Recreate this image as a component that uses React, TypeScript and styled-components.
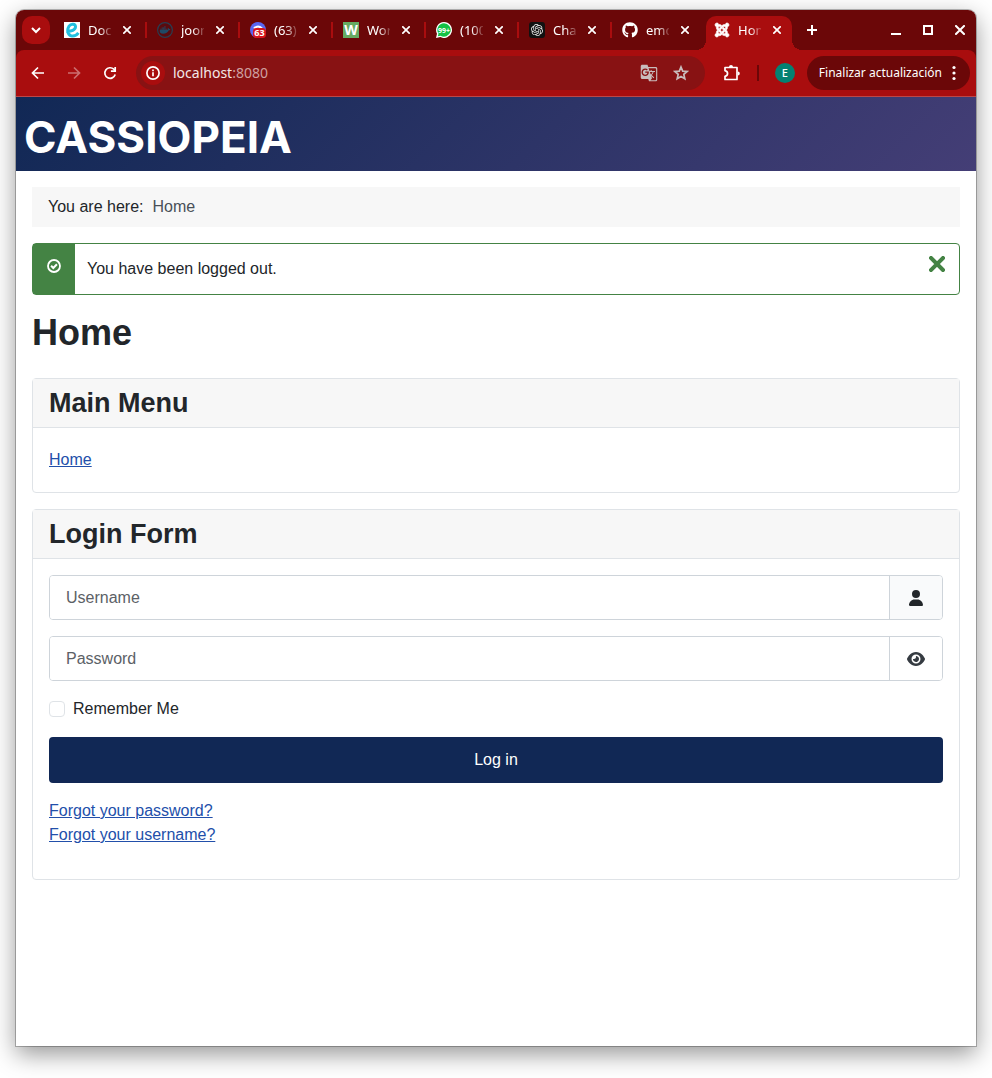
import React, { type ReactNode } from 'react';
import styled, { createGlobalStyle, css } from 'styled-components';
import { FaDocker, FaGithub, FaJoomla } from 'react-icons/fa';
import { FaEye, FaUser } from 'react-icons/fa6';
import { SiOpenai } from 'react-icons/si';
import { MdGTranslate } from 'react-icons/md';

const color = {
  frame: '#6b0708',
  accent: '#a90d0e',
  omnibox: '#881213',
  navy: '#112855',
  green: '#448344',
  ink: '#22262a',
  link: '#224faa',
  line: '#dfe3e7',
  field: '#ced4da',
  soft: '#f7f7f7',
};

const GlobalStyle = createGlobalStyle`
  *, *::before, *::after { box-sizing: border-box; }
  body {
    margin: 0;
    background: #fff;
    color: ${color.ink};
    font: 16px/24px "Liberation Sans", Arial, sans-serif;
  }
  button, input { font: inherit; color: inherit; }
  svg { display: block; flex: none; }
`;

const Desktop = styled.div`
  display: flex;
  min-height: 100vh;
  padding: 10px 16px 32px;
`;

const BrowserWindow = styled.div`
  flex: 1;
  min-width: 0;
  display: flex;
  flex-direction: column;
  background: #fff;
  border-radius: 8px 8px 0 0;
  box-shadow: 0 0 0 1px rgba(0, 0, 0, 0.25), 0 8px 24px rgba(0, 0, 0, 0.42);
`;

/* Browser chrome */

const Chrome = styled.header`
  background: ${color.frame};
  border-radius: 8px 8px 0 0;
  color: #fff;
  font-family: "Noto Sans", sans-serif;
`;

const PlainButton = styled.button`
  display: inline-flex;
  align-items: center;
  justify-content: center;
  flex: none;
  padding: 0;
  border: 0;
  background: none;
  cursor: pointer;
`;

const TabStrip = styled.div`
  display: flex;
  align-items: center;
  height: 40px;
  padding: 0 0 0 6px;
`;

const TabSearch = styled(PlainButton)`
  width: 28px;
  height: 28px;
  margin-right: 6px;
  border-radius: 10px;
  background: ${color.accent};
`;

const TabItem = styled.div<{ $active?: boolean }>`
  position: relative;
  display: flex;
  align-items: center;
  gap: 8px;
  flex: 0 1 93px;
  height: 28px;
  padding-left: 8px;

  ${({ $active }) =>
    $active
      ? css`
          flex-basis: 86px;
          align-self: flex-end;
          height: 34px;
          padding-bottom: 6px;
          margin-left: -1px;
          background: ${color.accent};
          border-radius: 10px 10px 0 0;

          &::before,
          &::after {
            content: '';
            position: absolute;
            bottom: 0;
            width: 10px;
            height: 10px;
          }
          &::before {
            right: 100%;
            background: radial-gradient(circle at 0 0, transparent 10px, ${color.accent} 10px);
          }
          &::after {
            left: 100%;
            background: radial-gradient(circle at 100% 0, transparent 10px, ${color.accent} 10px);
          }
        `
      : css`
          &:not(:nth-last-child(4))::after {
            content: '';
            width: 2px;
            height: 16px;
            margin-left: 2px;
            background: ${color.accent};
          }
        `}
`;

const TabTitle = styled.span`
  width: 23px;
  overflow: hidden;
  white-space: nowrap;
  font-size: 13px;
  line-height: 20px;
  mask-image: linear-gradient(90deg, #000 50%, transparent 110%);
`;

const TabClose = styled(PlainButton)`
  width: 16px;
  height: 16px;
`;

const NewTab = styled(PlainButton)`
  width: 28px;
  height: 28px;
  margin-left: 6px;
`;

const WindowControls = styled.div`
  display: flex;
  margin-left: auto;
`;

const WindowControl = styled(PlainButton)`
  width: 32px;
  height: 32px;
`;

const Toolbar = styled.div`
  display: flex;
  align-items: center;
  height: 47px;
  padding: 0 6px 0 4px;
  background: ${color.accent};
  border-bottom: 1px solid #bd4647;
  border-radius: 8px 8px 0 0;
`;

const ToolButton = styled(PlainButton)<{ $dim?: boolean }>`
  width: 36px;
  height: 34px;
  opacity: ${({ $dim }) => ($dim ? 0.4 : 1)};
`;

const Omnibox = styled.div`
  display: flex;
  align-items: center;
  flex: 1;
  min-width: 0;
  height: 34px;
  margin: 0 9px 0 8px;
  padding: 0 8px 0 5px;
  border-radius: 17px;
  background: ${color.omnibox};
`;

const SiteInfo = styled(PlainButton)`
  width: 24px;
  height: 24px;
  border-radius: 50%;
  background: ${color.accent};
`;

const Address = styled.span`
  flex: 1;
  padding-left: 8px;
  font-size: 14px;
  line-height: 20px;
  color: #f3e7e7;
`;

const Port = styled.span`
  color: #cfa0a1;
`;

const OmniAction = styled(PlainButton)`
  width: 32px;
  height: 32px;
  color: #c9bcbc;
`;

const Divider = styled.span`
  width: 2px;
  height: 16px;
  margin: 0 16px 0 7px;
  background: ${color.frame};
`;

const Avatar = styled(PlainButton)`
  width: 20px;
  height: 20px;
  margin-right: 12px;
  border-radius: 50%;
  background: #048272;
  color: #fff;
  font-size: 11px;
  font-weight: 500;
`;

const UpdateButton = styled(PlainButton)`
  gap: 4px;
  height: 34px;
  padding: 0 8px 0 12px;
  border-radius: 17px;
  background: ${color.frame};
  color: #fff;
  font-size: 12px;
`;

/* Site */

const SiteHeader = styled.div`
  display: flex;
  align-items: center;
  height: 74px;
  padding: 6px 8px 0;
  background: linear-gradient(135deg, #112855 0%, #443e76 100%);
`;

const Brand = styled.a`
  color: #fff;
  font: 700 44px/48px Inter, sans-serif;
  text-decoration: none;
`;

const Main = styled.main`
  display: flex;
  flex-direction: column;
  gap: 16px;
  padding: 16px;
`;

const Breadcrumb = styled.nav`
  display: flex;
  gap: 9px;
  padding: 8px 16px;
  background: ${color.soft};
`;

const Current = styled.span`
  color: #495057;
`;

const Alert = styled.div`
  display: flex;
  height: 52px;
  border: 1px solid ${color.green};
  border-radius: 4px;
`;

const AlertIcon = styled.span`
  display: flex;
  justify-content: center;
  width: 42px;
  padding-top: 15px;
  background: ${color.green};
`;

const AlertText = styled.div`
  flex: 1;
  padding: 13px 12px;
`;

const AlertClose = styled(PlainButton)`
  width: 44px;
  height: 40px;
`;

const PageTitle = styled.h1`
  margin: 0 0 8px;
  font-size: 36px;
  line-height: 43px;
`;

const Card = styled.section`
  border: 1px solid ${color.line};
  border-radius: 4px;
`;

const CardTitle = styled.h3`
  margin: 0;
  padding: 8px 16px;
  border-bottom: 1px solid ${color.line};
  background: ${color.soft};
  font-size: 27px;
  line-height: 32px;
`;

const MenuBody = styled.div`
  padding: 20px 16px;
`;

const LoginBody = styled.form`
  display: flex;
  flex-direction: column;
  gap: 16px;
  padding: 16px 16px 32px;
`;

const InputGroup = styled.div`
  display: flex;
  height: 45px;
  border: 1px solid ${color.field};
  border-radius: 4px;
  overflow: hidden;
`;

const TextInput = styled.input`
  flex: 1;
  min-width: 0;
  padding: 0 16px;
  border: 0;
  background: #fff;
  outline-offset: -2px;

  &::placeholder {
    color: #5c6166;
    opacity: 1;
  }
`;

const addon = css`
  display: flex;
  align-items: center;
  justify-content: center;
  width: 53px;
  padding: 0;
  border: 0;
  border-left: 1px solid ${color.field};
`;

const UserAddon = styled.span`
  ${addon}
  background: #f9fafb;
`;

const RevealButton = styled.button`
  ${addon}
  background: #fff;
  color: #353b41;
  cursor: pointer;
`;

const Remember = styled.label`
  display: flex;
  align-items: center;
  gap: 8px;
`;

const CheckBox = styled.input`
  appearance: none;
  width: 16px;
  height: 16px;
  margin: 0;
  border: 1px solid ${color.line};
  border-radius: 4px;
  background: #fff;

  &:checked {
    background: ${color.navy};
  }
`;

const SubmitButton = styled.button`
  height: 46px;
  border: 0;
  border-radius: 4px;
  background: ${color.navy};
  color: #fff;
  cursor: pointer;
`;

const LinkList = styled.ul`
  margin: 0;
  padding: 0;
  list-style: none;
`;

const TextLink = styled.a`
  color: ${color.link};
`;

/* Drawings */

const Cross = ({ size, stroke, tint = '#fff' }: { size: number; stroke: number; tint?: string }) => {
  const near = stroke / 2;
  const far = size - near;
  return (
    <svg width={size} height={size} viewBox={`0 0 ${size} ${size}`} stroke={tint} strokeWidth={stroke} strokeLinecap="square">
      <path d={`M${near} ${near}L${far} ${far}M${far} ${near}L${near} ${far}`} />
    </svg>
  );
};

const Line = ({ d, size = 16, width = 2 }: { d: string; size?: number; width?: number }) => (
  <svg width={size} height={size} viewBox={`0 0 ${size} ${size}`} fill="none" stroke="#fff" strokeWidth={width}>
    <path d={d} />
  </svg>
);

const Reload = () => (
  <svg width="16" height="16" viewBox="0 0 16 16" fill="none" stroke="#fff" strokeWidth="1.7">
    <path d="M13.2 9.6A5.3 5.3 0 1 1 11.8 4.2L13.4 5.8" />
    <path d="M13.2 2V6.2H8.9" />
  </svg>
);

const Info = () => (
  <svg width="16" height="16" viewBox="0 0 16 16" fill="none" stroke="#fff" strokeWidth="1.7">
    <circle cx="8" cy="8" r="6.1" />
    <path d="M8 7.3V11.2M8 4.6V6.2" />
  </svg>
);

const Star = () => (
  <svg width="16" height="16" viewBox="0 0 16 16" fill="none" stroke="currentColor" strokeWidth="1.7">
    <path d="M8 2L9.7 6.1L14.1 6.5L10.8 9.4L11.8 13.7L8 11.4L4.2 13.7L5.2 9.4L1.9 6.5L6.3 6.1Z" />
  </svg>
);

const Puzzle = () => (
  <svg width="18" height="18" viewBox="0 0 18 18">
    <path d="M2 3.5H14V15.5H2V12.3C5.4 11.8 5.4 7.2 2 6.7Z" fill="none" stroke="#fff" strokeWidth="1.7" strokeLinejoin="round" />
    <path d="M6 3a2 2 0 0 1 4 0zM14.8 7.5a2 2 0 0 1 0 4z" fill="#fff" />
  </svg>
);

const Dots = () => (
  <svg width="16" height="16" viewBox="0 0 16 16" fill="#fff">
    <circle cx="8" cy="2.5" r="1.6" />
    <circle cx="8" cy="8" r="1.6" />
    <circle cx="8" cy="13.5" r="1.6" />
  </svg>
);

const EdgeMark = () => (
  <svg width="16" height="16" viewBox="0 0 16 16">
    <rect width="16" height="16" fill="#fff" />
    <path d="M2.3 9.2C7 9.7 11.7 8 11.5 4.5C11.3 1.6 7 1.3 5 4.2C2.9 7.4 3.3 12.5 7 13.7C9.8 14.5 12.7 13 14.4 10.8" fill="none" stroke="#22bfe0" strokeWidth="3" />
  </svg>
);

const DockerMark = () => (
  <svg width="16" height="16" viewBox="0 0 16 16">
    <circle cx="8" cy="8" r="7.4" fill="#5a0a0e" stroke="#2b3d50" strokeWidth="1.2" />
    <FaDocker x="2.5" y="2.5" size={11} color="#1f4a66" />
  </svg>
);

const ChatMark = () => (
  <svg width="16" height="16" viewBox="0 0 16 16">
    <circle cx="8" cy="8" r="8" fill="#5865f2" />
    <path d="M4 6.5Q8 2.5 12 6.5" fill="none" stroke="#fff" strokeWidth="2" />
    <rect x="3" y="6" width="13" height="10" rx="3.5" fill="#d9141b" />
    <text x="9.5" y="14" textAnchor="middle" fill="#fff" fontFamily="Noto Sans, sans-serif" fontWeight="700" fontSize="9">63</text>
  </svg>
);

const SchoolMark = () => (
  <svg width="16" height="16" viewBox="0 0 16 16">
    <rect width="16" height="16" fill="#66ab62" />
    <text x="8" y="13" textAnchor="middle" fill="#fff" fontFamily="Noto Sans, sans-serif" fontWeight="700" fontSize="14">W</text>
  </svg>
);

const MessengerMark = () => (
  <svg width="16" height="16" viewBox="0 0 16 16">
    <path d="M8 0a8 8 0 1 1-3.7 15.1L0 16l1-4.2A8 8 0 0 1 8 0z" fill="#fff" />
    <path d="M8 1.3a6.7 6.7 0 1 1-3.5 12.4l-2.7.6.7-2.6A6.7 6.7 0 0 1 8 1.3z" fill="#14c145" />
    <text x="8" y="11" textAnchor="middle" fill="#fff" fontFamily="Noto Sans, sans-serif" fontWeight="700" fontSize="7">99+</text>
  </svg>
);

const AssistantMark = () => (
  <svg width="16" height="16" viewBox="0 0 16 16">
    <rect width="16" height="16" rx="3" fill="#111" />
    <SiOpenai x="2" y="2" size={12} color="#eee" />
  </svg>
);

const CheckRing = () => (
  <svg width="14" height="14" viewBox="0 0 14 14" fill="none" stroke="#fff">
    <circle cx="7" cy="7" r="6" strokeWidth="1.8" />
    <path d="M4.1 6.8L6.3 9L9.9 5.2" strokeWidth="2" />
  </svg>
);

const tabs: { title: string; icon: ReactNode }[] = [
  { title: 'Docs', icon: <EdgeMark /> },
  { title: 'joomla', icon: <DockerMark /> },
  { title: '(63) |', icon: <ChatMark /> },
  { title: 'Word', icon: <SchoolMark /> },
  { title: '(100)', icon: <MessengerMark /> },
  { title: 'Chat', icon: <AssistantMark /> },
  { title: 'emc', icon: <FaGithub size={16} /> },
  { title: 'Home', icon: <FaJoomla size={16} stroke="#fff" strokeWidth={20} /> },
];

const BrowserChrome = () => (
  <Chrome>
    <TabStrip>
      <TabSearch aria-label="Search tabs"><Line d="M4 6L8 10L12 6" /></TabSearch>
      {tabs.map(({ title, icon }, i) => (
        <TabItem key={title} $active={i === tabs.length - 1}>
          {icon}
          <TabTitle>{title}</TabTitle>
          <TabClose aria-label={`Close ${title}`}><Cross size={8} stroke={1.7} /></TabClose>
        </TabItem>
      ))}
      <NewTab aria-label="New tab"><Line d="M8 3V13M3 8H13" /></NewTab>
      <WindowControls>
        <WindowControl aria-label="Minimize"><Line d="M3 12H13" /></WindowControl>
        <WindowControl aria-label="Maximize"><Line d="M4 4H12V12H4Z" /></WindowControl>
        <WindowControl aria-label="Close window"><Cross size={10} stroke={2} /></WindowControl>
      </WindowControls>
    </TabStrip>
    <Toolbar>
      <ToolButton aria-label="Back"><Line width={1.7} d="M14 8H3M8 2.5L2.5 8L8 13.5" /></ToolButton>
      <ToolButton aria-label="Forward" $dim><Line width={1.7} d="M2 8H13M8 2.5L13.5 8L8 13.5" /></ToolButton>
      <ToolButton aria-label="Reload"><Reload /></ToolButton>
      <Omnibox>
        <SiteInfo aria-label="Site information"><Info /></SiteInfo>
        <Address>localhost<Port>:8080</Port></Address>
        <OmniAction aria-label="Translate"><MdGTranslate size={18} /></OmniAction>
        <OmniAction aria-label="Bookmark"><Star /></OmniAction>
      </Omnibox>
      <ToolButton aria-label="Extensions"><Puzzle /></ToolButton>
      <Divider />
      <Avatar aria-label="Profile">E</Avatar>
      <UpdateButton>Finalizar actualización<Dots /></UpdateButton>
    </Toolbar>
  </Chrome>
);

export default function App() {
  return (
    <Desktop>
      <GlobalStyle />
      <BrowserWindow>
        <BrowserChrome />
        <SiteHeader><Brand href="#">CASSIOPEIA</Brand></SiteHeader>
        <Main>
          <Breadcrumb aria-label="Breadcrumbs">
            <span>You are here:</span>
            <Current>Home</Current>
          </Breadcrumb>
          <Alert role="status">
            <AlertIcon><CheckRing /></AlertIcon>
            <AlertText>You have been logged out.</AlertText>
            <AlertClose aria-label="Close message"><Cross size={16} stroke={4} tint={color.green} /></AlertClose>
          </Alert>
          <PageTitle>Home</PageTitle>
          <Card>
            <CardTitle>Main Menu</CardTitle>
            <MenuBody><TextLink href="#">Home</TextLink></MenuBody>
          </Card>
          <Card>
            <CardTitle>Login Form</CardTitle>
            <LoginBody onSubmit={(event) => event.preventDefault()}>
              <InputGroup>
                <TextInput type="text" placeholder="Username" aria-label="Username" />
                <UserAddon><FaUser size={16} /></UserAddon>
              </InputGroup>
              <InputGroup>
                <TextInput type="password" placeholder="Password" aria-label="Password" />
                <RevealButton type="button" aria-label="Show password"><FaEye size={18} /></RevealButton>
              </InputGroup>
              <Remember><CheckBox type="checkbox" />Remember Me</Remember>
              <SubmitButton type="submit">Log in</SubmitButton>
              <LinkList>
                <li><TextLink href="#">Forgot your password?</TextLink></li>
                <li><TextLink href="#">Forgot your username?</TextLink></li>
              </LinkList>
            </LoginBody>
          </Card>
        </Main>
      </BrowserWindow>
    </Desktop>
  );
}
